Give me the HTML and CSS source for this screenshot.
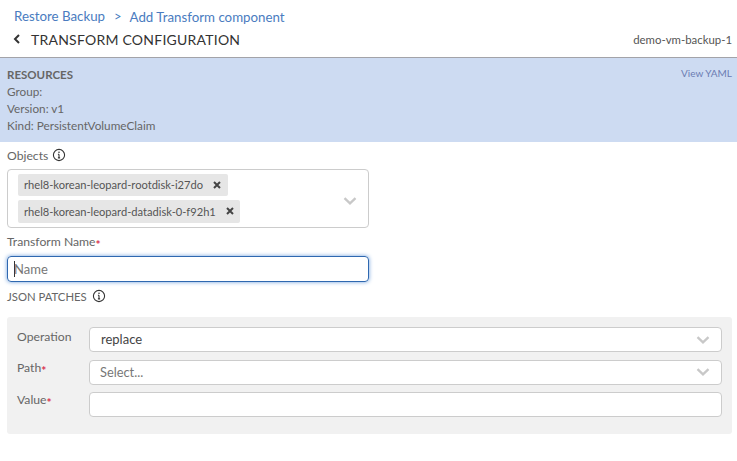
FILE: index.html
```html
<!DOCTYPE html>
<html lang="en">
<head>
<meta charset="utf-8">
<title>Transform configuration</title>
<link rel="stylesheet" href="styles.css">
</head>
<body>
<header class="header">
  <nav class="crumbs"><a class="crumb">Restore Backup</a><span class="crumb-sep">&gt;</span><a class="crumb crumb-current">Add Transform component</a></nav>
  <div class="title-row">
    <svg class="back" width="8" height="10" viewBox="0 0 8 10"><path d="M6 1 2 5l4 4" fill="none" stroke="#333" stroke-width="2"/></svg>
    <h1 class="title">TRANSFORM CONFIGURATION</h1>
    <span class="backup-name">demo-vm-backup-1</span>
  </div>
</header>
<section class="resources">
  <div class="res-text">
    <div class="res-head">RESOURCES</div>
    <div>Group:</div>
    <div>Version: v1</div>
    <div>Kind: PersistentVolumeClaim</div>
  </div>
  <a class="yaml">View YAML</a>
</section>
<main class="form">
  <div class="label-row obj-label">
    <span>Objects</span>
    <svg class="info" width="14" height="14" viewBox="0 0 14 14"><circle cx="7" cy="7" r="5.6" fill="none" stroke="#333" stroke-width="1.1"/><path d="M7 6.2v3.6M5.9 9.9h2.2M5.9 6.3H7" fill="none" stroke="#333" stroke-width="1.1"/><circle cx="7" cy="4.2" r=".8" fill="#333"/></svg>
  </div>
  <div class="multi">
    <div class="chips">
      <span class="chip">rhel8-korean-leopard-rootdisk-i27do<svg class="chip-x" width="8" height="8" viewBox="0 0 8 8"><path d="M1 1l6 6M7 1 1 7" stroke="#444" stroke-width="2"/></svg></span>
      <span class="chip">rhel8-korean-leopard-datadisk-0-f92h1<svg class="chip-x" width="8" height="8" viewBox="0 0 8 8"><path d="M1 1l6 6M7 1 1 7" stroke="#444" stroke-width="2"/></svg></span>
    </div>
    <svg class="chev" width="14" height="8" viewBox="0 0 14 8"><path d="M1.5 1.2 7 6.4l5.5-5.2" fill="none" stroke="#c8c8c8" stroke-width="2.3"/></svg>
  </div>
  <div class="name-label">Transform Name<span class="req">*</span></div>
  <div class="name-input"><span class="caret"></span><span class="placeholder">Name</span></div>
  <div class="label-row json-label">
    <span>JSON PATCHES</span>
    <svg class="info" width="14" height="14" viewBox="0 0 14 14"><circle cx="7" cy="7" r="5.6" fill="none" stroke="#333" stroke-width="1.1"/><path d="M7 6.2v3.6M5.9 9.9h2.2M5.9 6.3H7" fill="none" stroke="#333" stroke-width="1.1"/><circle cx="7" cy="4.2" r=".8" fill="#333"/></svg>
  </div>
  <div class="panel">
    <div class="row">
      <label class="row-label row-label-first">Operation</label>
      <div class="field"><span class="value">replace</span><svg class="chev" width="14" height="8" viewBox="0 0 14 8"><path d="M1.5 1.2 7 6.4l5.5-5.2" fill="none" stroke="#c8c8c8" stroke-width="2.3"/></svg></div>
    </div>
    <div class="row">
      <label class="row-label">Path<span class="req">*</span></label>
      <div class="field"><span class="value muted">Select...</span><svg class="chev" width="14" height="8" viewBox="0 0 14 8"><path d="M1.5 1.2 7 6.4l5.5-5.2" fill="none" stroke="#c8c8c8" stroke-width="2.3"/></svg></div>
    </div>
    <div class="row">
      <label class="row-label">Value<span class="req">*</span></label>
      <div class="field"></div>
    </div>
  </div>
</main>
</body>
</html>
```

FILE: styles.css
```css
* { box-sizing: border-box; }
html, body { margin: 0; padding: 0; }
body { width: 737px; height: 461px; overflow: hidden; background: #fff; font-family: Lato, sans-serif; font-size: 12.2px; color: #666; }

.header { height: 58px; padding: 8px 5px 0 14px; border-bottom: 1px solid #a3a3a8; }
.crumbs { display: flex; align-items: center; height: 16px; font-size: 13.3px; line-height: 16px; color: #4a7cc0; }
.crumb-sep { margin: 0 9px 0 9px; font-size: 13px; }
.crumb-current { position: relative; top: 1px; margin-left: -1px; }
.title-row { display: flex; align-items: center; height: 20px; margin-top: 5px; margin-left: -1px; }
.back { margin-right: 10px; }
.title { flex: 1; margin: 0; font-size: 14px; font-weight: 400; color: #333; letter-spacing: 0.23px; }
.backup-name { font-size: 11.4px; color: #555; }

.resources { display: flex; justify-content: space-between; height: 84px; padding: 8px 5px 0 7px; background: #cddbf2; font-size: 11.75px; line-height: 17px; color: #666; }
.res-head { font-size: 11.5px; font-weight: 700; color: #666; }
.yaml { font-size: 10px; line-height: 15px; color: #6b7cb3; }

.form { padding: 0 5px 0 7px; }
.label-row { display: flex; align-items: center; gap: 4px; }
.obj-label { height: 16px; margin-top: 5px; }
.info { flex: none; }

.multi { display: flex; align-items: center; width: 362px; height: 59px; margin-top: 6px; padding: 4px 11px 0 10px; border: 1px solid #ccc; border-radius: 4px; }
.chips { flex: 1; display: flex; flex-direction: column; align-items: flex-start; gap: 4px; margin-bottom: 5px; }
.chip { display: flex; align-items: center; height: 22.5px; padding: 0 6.5px 0 6px; gap: 10px; background: #e6e6e6; border-radius: 2px; font-size: 11.13px; color: #555; }
.chip-x { flex: none; }

.name-label { height: 16px; margin-top: 6px; line-height: 16px; }
.req { color: #d9304f; font-size: 12px; font-weight: 700; line-height: 1; vertical-align: -3px; }
.name-input { display: flex; align-items: center; width: 362px; height: 26px; margin-top: 6px; padding-left: 6px; border: 1px solid #2f68b0; border-radius: 4px; box-shadow: 0 0 4px #6f9fdc; font-size: 13px; }
.caret { width: 1px; height: 16px; margin-right: -1px; background: #333; }
.placeholder { color: #777; }
.json-label { height: 16px; margin-top: 6px; font-size: 11.3px; gap: 5px; }

.panel { width: 725px; height: 117px; margin-top: 13px; padding: 10px 10px 0; background: #f1f1f1; border-radius: 3px; }
.row { display: flex; align-items: flex-start; height: 32.5px; }
.row-label { width: 72px; line-height: 16px; color: #666; }
.row-label-first { padding-top: 2px; }
.field { display: flex; align-items: center; justify-content: space-between; width: 633px; height: 25px; padding: 0 11px; background: #fff; border: 1px solid #ccc; border-radius: 4px; }
.value { font-size: 13px; line-height: 20px; padding-bottom: 2px; color: #444; }
.muted { color: #777; font-size: 12.8px; margin-left: -1px; padding-bottom: 0; }
```
